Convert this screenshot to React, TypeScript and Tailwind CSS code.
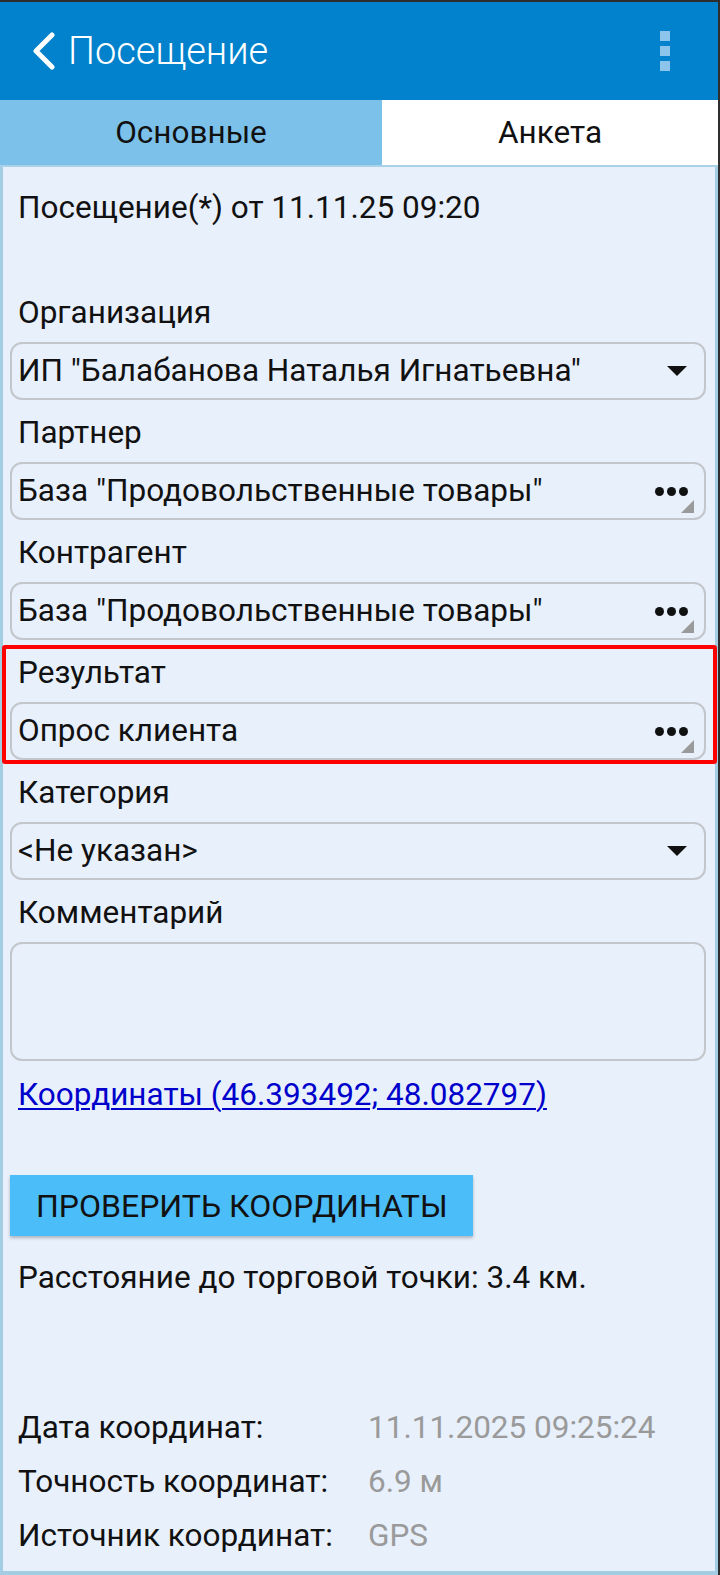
import React from "react";

const font = { fontFamily: "Roboto, 'Noto Sans', sans-serif" };

const DropArrow = () => (
  <svg width="22" height="12" viewBox="0 0 22 12" className="shrink-0">
    <polygon points="1,1 21,1 11,11" fill="#111" />
  </svg>
);

const DotsIcon = () => (
  <div className="relative flex h-full w-[44px] shrink-0 items-center justify-end">
    <div className="flex gap-[3px]">
      <span className="block h-[9px] w-[9px] rounded-full bg-[#111]" />
      <span className="block h-[9px] w-[9px] rounded-full bg-[#111]" />
      <span className="block h-[9px] w-[9px] rounded-full bg-[#111]" />
    </div>
    <svg width="13" height="13" viewBox="0 0 13 13" className="absolute bottom-[5px] right-[-6px]">
      <polygon points="13,0 13,13 0,13" fill="#9a9a9a" />
    </svg>
  </div>
);

const Label = ({ children }: { children: React.ReactNode }) => (
  <div className="flex h-[62px] items-center pl-[15px] pt-[3px] text-[31.5px] text-[#111]">
    {children}
  </div>
);

const Field = ({ value, kind }: { value: string; kind: "select" | "dots" }) => (
  <div className="ml-[7px] mr-[9px] flex h-[58px] items-center rounded-[12px] border-2 border-[#c3c6ca] pl-[6px] pr-[16px] text-[31.5px] text-[#111]">
    <span className="flex-1 truncate">{value}</span>
    {kind === "select" ? <DropArrow /> : <DotsIcon />}
  </div>
);

const InfoRow = ({ label, value }: { label: string; value: string }) => (
  <div className="flex h-[54px] items-center pl-[15px] text-[31.5px]">
    <span className="w-[350px] text-[#111]">{label}</span>
    <span className="text-[#9a9a9a]">{value}</span>
  </div>
);

export default function App() {
  return (
    <div
      className="flex h-[1575px] w-[720px] flex-col border-r-2 border-t-2 border-[#2e2e2e] bg-[#e8f0fb]"
      style={font}
    >
      {/* toolbar */}
      <header className="flex h-[98px] shrink-0 items-center bg-[#0282cc] pl-[30px] pr-[48px] text-white">
        <svg width="26" height="38" viewBox="0 0 26 38" className="mr-[12px]">
          <polyline points="22,3 6,19 22,35" fill="none" stroke="#fff" strokeWidth="5" strokeLinecap="round" strokeLinejoin="round" />
        </svg>
        <h1 className="flex-1 text-[38px] font-light">Посещение</h1>
        <div className="flex flex-col gap-[5px]">
          <span className="block h-[10px] w-[10px] bg-[#8cc4ec]" />
          <span className="block h-[10px] w-[10px] bg-[#8cc4ec]" />
          <span className="block h-[10px] w-[10px] bg-[#8cc4ec]" />
        </div>
      </header>

      {/* tabs */}
      <nav className="flex h-[67px] shrink-0 text-[31.5px] text-[#111]">
        <div className="flex w-[382px] items-center justify-center border-b-2 border-[#a9d2e8] bg-[#7cc1e9]">
          Основные
        </div>
        <div className="flex flex-1 items-center justify-center border-b-2 border-[#a9d2e8] bg-white">
          Анкета
        </div>
      </nav>

      <main className="flex flex-1 flex-col border-x-[3px] border-b-[4px] border-[#a3cde3]">
        <div className="flex h-[80px] items-center pl-[15px] pt-[2px] text-[31.5px] text-[#111]">
          Посещение(*) от 11.11.25 09:20
        </div>
        <div className="h-[33px]" />

        <Label>Организация</Label>
        <Field value={'ИП "Балабанова Наталья Игнатьевна"'} kind="select" />

        <Label>Партнер</Label>
        <Field value={'База "Продовольственные товары"'} kind="dots" />

        <Label>Контрагент</Label>
        <Field value={'База "Продовольственные товары"'} kind="dots" />

        <div className="relative">
          <Label>Результат</Label>
          <Field value="Опрос клиента" kind="dots" />
          <div className="pointer-events-none absolute bottom-[-4px] left-[-1px] right-[-2px] top-[5px] rounded-[3px] border-[4px] border-[#ff0000]" />
        </div>

        <Label>Категория</Label>
        <Field value="<Не указан>" kind="select" />

        <Label>Комментарий</Label>
        <div className="ml-[7px] mr-[9px] h-[119px] rounded-[12px] border-2 border-[#c3c6ca]" />

        <div className="flex h-[64px] items-center pl-[15px] pt-[3px] text-[31.5px]">
          <a className="text-[#0000cc] underline decoration-2 underline-offset-[3px]" href="#">
            Координаты (46.393492; 48.082797)
          </a>
        </div>

        <div className="h-[50px]" />

        <button className="ml-[7px] flex h-[61px] w-[463px] items-center bg-[#4bbdf9] pl-[26px] text-[32px] text-[#111] shadow-[0_2px_3px_rgba(0,0,0,0.25)]">
          ПРОВЕРИТЬ КООРДИНАТЫ
        </button>

        <div className="flex h-[72px] items-center pl-[15px] pt-[12px] text-[31.5px] text-[#111]">
          Расстояние до торговой точки: 3.4 км.
        </div>

        <div className="h-[93px]" />

        <InfoRow label="Дата координат:" value="11.11.2025 09:25:24" />
        <InfoRow label="Точность координат:" value="6.9 м" />
        <InfoRow label="Источник координат:" value="GPS" />
      </main>
    </div>
  );
}
